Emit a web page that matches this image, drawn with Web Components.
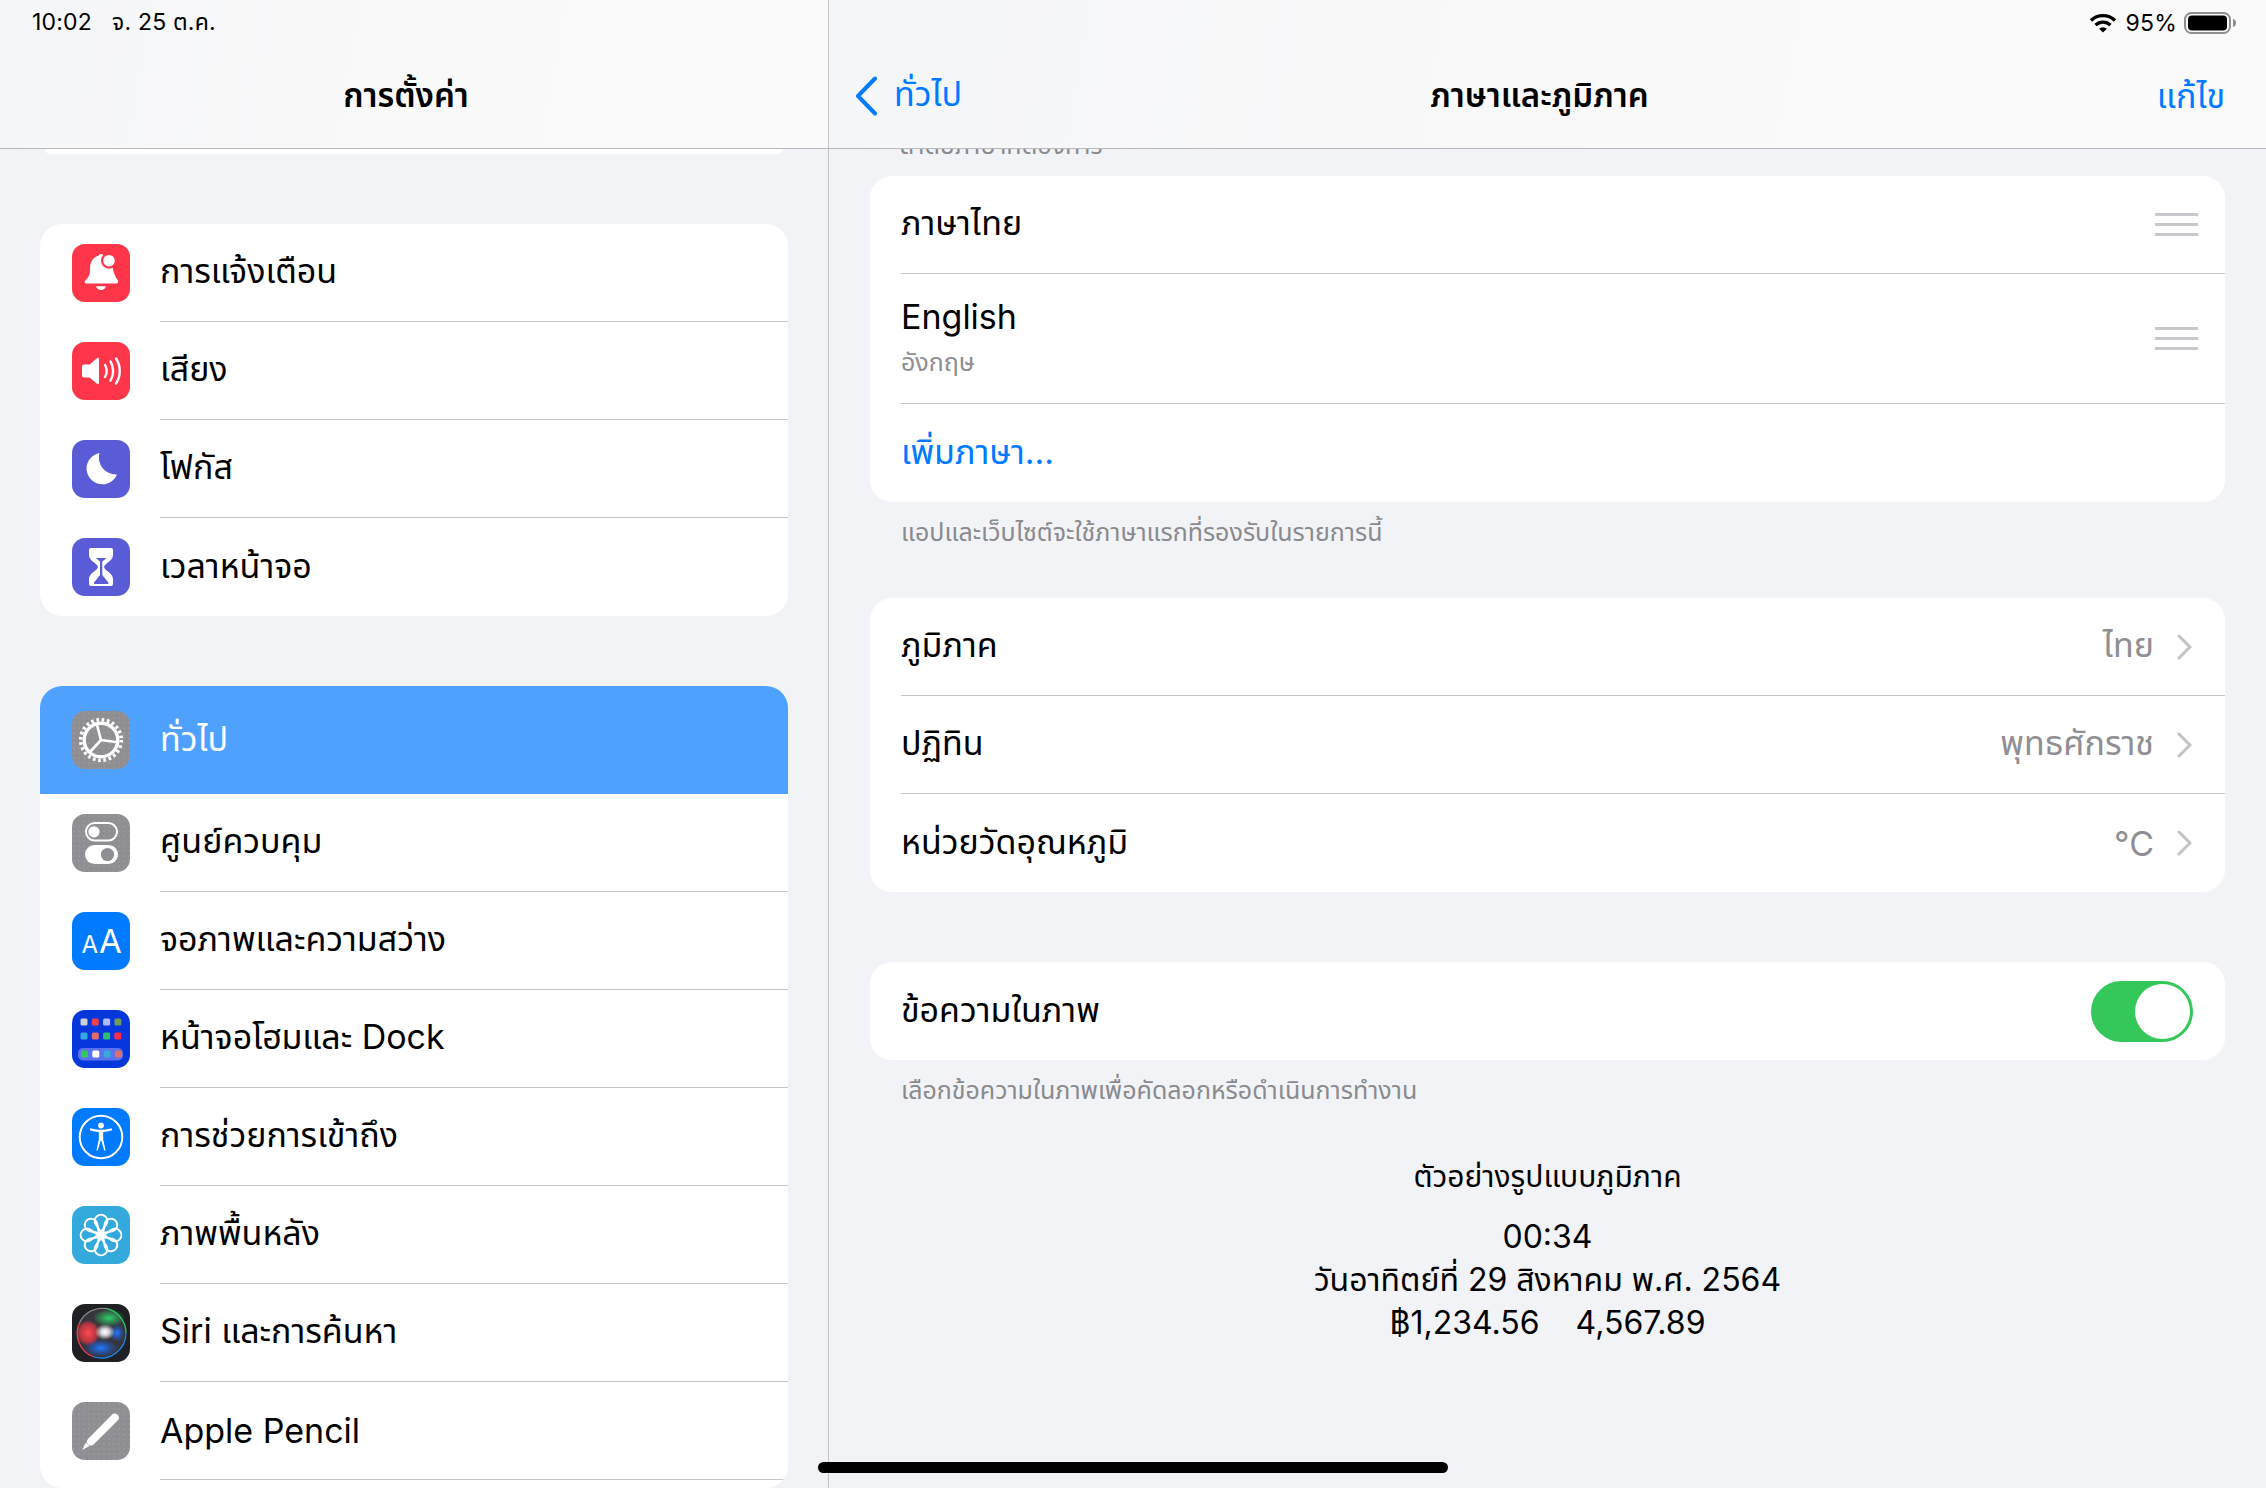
<!DOCTYPE html>
<html lang="th">
<head>
<meta charset="utf-8">
<title>การตั้งค่า</title>
<style>
  html, body { margin: 0; height: 100%; background: #f2f3f7; }
  body { font-family: Inter, "Noto Sans", "Noto Sans Thai", sans-serif; color: #000; overflow: hidden; }
</style>
</head>
<body>

<settings-app>
  <main-pane slot="master">
    <nav-bar slot="bar">
      <span slot="status">10:02&nbsp;&nbsp; จ. 25 ต.ค.</span>
      <span slot="title">การตั้งค่า</span>
    </nav-bar>
    <div class="cut"></div>

    <settings-group style="margin: 0 40px; --gap: 70px">
      <settings-row icon="bell">การแจ้งเตือน</settings-row>
      <settings-row icon="sound">เสียง</settings-row>
      <settings-row icon="moon">โฟกัส</settings-row>
      <settings-row icon="hourglass" last>เวลาหน้าจอ</settings-row>
    </settings-group>

    <settings-group style="margin: 0 40px; --gap: 70px; flex: 1">
      <settings-row icon="gear" selected>ทั่วไป</settings-row>
      <settings-row icon="switches">ศูนย์ควบคุม</settings-row>
      <settings-row icon="text">จอภาพและความสว่าง</settings-row>
      <settings-row icon="home">หน้าจอโฮมและ Dock</settings-row>
      <settings-row icon="access">การช่วยการเข้าถึง</settings-row>
      <settings-row icon="flower">ภาพพื้นหลัง</settings-row>
      <settings-row icon="siri">Siri และการค้นหา</settings-row>
      <settings-row icon="pencil">Apple Pencil</settings-row>
    </settings-group>
  </main-pane>

  <main-pane slot="detail">
    <nav-bar slot="bar">
      <status-icons slot="status"></status-icons>
      <back-link slot="leading">ทั่วไป</back-link>
      <span slot="title">ภาษาและภูมิภาค</span>
      <span slot="trailing">แก้ไข</span>
    </nav-bar>

    <group-note style="margin: -34px 40px 0">ลำดับภาษาที่ต้องการ</group-note>

    <settings-group style="margin: 16px 41px 0 41px">
      <settings-row>ภาษาไทย<drag-handle slot="accessory"></drag-handle></settings-row>
      <settings-row tall>English<span slot="sub">อังกฤษ</span><drag-handle slot="accessory"></drag-handle></settings-row>
      <settings-row last link>เพิ่มภาษา...</settings-row>
    </settings-group>
    <group-note style="margin: 0 41px">แอปและเว็บไซต์จะใช้ภาษาแรกที่รองรับในรายการนี้</group-note>

    <settings-group style="margin: 51px 41px 0">
      <settings-row>ภูมิภาค<span slot="value">ไทย</span><row-chevron slot="accessory"></row-chevron></settings-row>
      <settings-row>ปฏิทิน<span slot="value">พุทธศักราช</span><row-chevron slot="accessory"></row-chevron></settings-row>
      <settings-row last>หน่วยวัดอุณหภูมิ<span slot="value">°C</span><row-chevron slot="accessory"></row-chevron></settings-row>
    </settings-group>

    <settings-group style="margin: 70px 41px 0">
      <settings-row last>ข้อความในภาพ<ios-toggle slot="accessory"></ios-toggle></settings-row>
    </settings-group>
    <group-note style="margin: 0 41px">เลือกข้อความในภาพเพื่อคัดลอกหรือดำเนินการทำงาน</group-note>

    <region-sample>
      <span slot="heading">ตัวอย่างรูปแบบภูมิภาค</span>
      <div>00:34</div>
      <div>วันอาทิตย์ที่ 29 สิงหาคม พ.ศ. 2564</div>
      <div>฿1,234.56&nbsp;&nbsp;&nbsp; 4,567.89</div>
    </region-sample>
  </main-pane>
</settings-app>

<script>
// дробим экран на части: сплит, шапка, группы, строки
const BG_GRAY = '#8e8e93';

function grayBack(id) {
  return `<defs><pattern id="${id}" width="5" height="5" patternUnits="userSpaceOnUse"><circle cx="2" cy="2" r=".5" fill="#b4b4b8"/></pattern></defs>
    <rect width="58" height="58" fill="${BG_GRAY}"/><rect width="58" height="58" fill="url(#${id})"/>`;
}

const ICONS = {
  bell: `<rect width="58" height="58" fill="#ff364a"/>
    <path d="M14.5 39.5c-2 0-2.4-1.8-1.2-3 3-3 4.7-5 4.7-12 0-7.500 4-11.500 8.500-12.700.6-2.400 4.400-2.400 5 0 4 1 7.500 4 8.500 9 1.500 8 3 11.500 5.500 15 1.200 1.500.6 3.700-1 3.700z" fill="#fff"/>
    <path d="M24 42.300h10c-.8 2.500-2.700 3.700-5 3.700s-4.200-1.200-5-3.700z" fill="#fff"/>
    <circle cx="37" cy="16.700" r="8" fill="#ff364a"/><circle cx="37" cy="16.700" r="5.800" fill="#fff"/>`,
  sound: `<rect width="58" height="58" fill="#ff364a"/>
    <path d="M12 22.500h5.500l7.500-6.300c1-.8 2-.3 2 1v23.600c0 1.300-1 1.800-2 1l-7.500-6.300H12c-1.300 0-2-.7-2-2v-9c0-1.300.7-2 2-2z" fill="#fff"/>
    <g fill="none" stroke="#fff" stroke-width="2.400" stroke-linecap="round">
      <path d="M33 23c2 3.500 2 8.500 0 12"/><path d="M38.500 19.500c3.500 5.500 3.500 13.500 0 19"/><path d="M44 16.500c5 7.500 5 17.500 0 25"/>
    </g>`,
  moon: `<rect width="58" height="58" fill="#5a5bd6"/>
    <path d="M27.500 13A15.800 15.800 0 1 0 45 34.500 17 17 0 0 1 27.500 13z" fill="#fff"/>`,
  hourglass: `<rect width="58" height="58" fill="#5a5bd6"/>
    <path d="M19 10h20q2 0 2 2v5c0 6-8 8-9 12 1 4 9 6 9 12v5q0 2-2 2H19q-2 0-2-2v-5c0-6 8-8 9-12-1-4-9-6-9-12v-5q0-2 2-2z" fill="#fff"/>
    <path d="M24 20h10.500l-4.200 3.500V37l6 7.500V46H22v-1.500l6-7.500V23.500z" fill="#5a5bd6"/>`,
  gear: grayBack('dotsA') + `<g fill="none" stroke="#fff">
      <circle cx="29" cy="29" r="20.300" stroke-width="3.600" stroke-dasharray="2.700 2.614"/>
      <circle cx="29" cy="29" r="16.800" stroke-width="3.400"/>
      <path d="M29 29 25 14M29 29 44 31M29 29 18 41" stroke-width="2.600"/>
    </g>`,
  switches: grayBack('dotsB') + `
    <rect x="14" y="9" width="31" height="17.500" rx="8.750" fill="none" stroke="#fff" stroke-width="2"/>
    <circle cx="22" cy="17.800" r="5.600" fill="#fff"/>
    <rect x="13" y="31" width="33" height="19" rx="9.500" fill="#fff"/>
    <circle cx="35.500" cy="40.500" r="6.600" fill="${BG_GRAY}"/>`,
  text: `<rect width="58" height="58" fill="#007aff"/>
    <text x="9.500" y="41" font-family="Inter, sans-serif" font-size="24" fill="#fff">A</text>
    <text x="27" y="41" font-family="Inter, sans-serif" font-size="33" fill="#fff">A</text>`,
  home: `<rect width="58" height="58" fill="#0537dd"/>
    ${['#cfcfd4','#f0404f','#aebcff','#6f9a5e'].map((c, i) => `<rect x="${8.500 + i * 11.300}" y="8.500" width="7" height="7" rx="1.500" fill="${c}"/>`).join('')}
    ${['#34aadc','#e06c6c','#2fbf71','#ff2d46'].map((c, i) => `<rect x="${8.500 + i * 11.300}" y="22.500" width="7" height="7" rx="1.500" fill="${c}"/>`).join('')}
    <rect x="6" y="38" width="45" height="12.500" rx="5" fill="#5a72ee"/>
    ${['#34c759','#ffffff','#34aadc','#e06c6c'].map((c, i) => `<rect x="${9 + i * 11.300}" y="40.500" width="7" height="7" rx="1.500" fill="${c}"/>`).join('')}`,
  access: `<rect width="58" height="58" fill="#007aff"/>
    <circle cx="29" cy="29" r="21.300" fill="none" stroke="#fff" stroke-width="2"/>
    <circle cx="29" cy="17.500" r="2.900" fill="#fff"/>
    <path d="M19 21.500q10 3 20 0" fill="none" stroke="#fff" stroke-width="2.300" stroke-linecap="round"/>
    <path d="M26.800 23.500h4.400v8l2.300 10.300c.2 1-1.200 1.200-1.500.3L29.500 33h-1l-2.500 9.100c-.3.900-1.700.7-1.500-.3l2.300-10.300z" fill="#fff"/>`,
  flower: `<rect width="58" height="58" fill="#34aadc"/>
    <g fill="none" stroke="#fff" stroke-width="2">
      ${[0,45,90,135,180,225,270,315].map(a => `<path transform="rotate(${a} 29 29)" d="M29 26 23.800 18.500A6.300 6.300 0 1 1 34.200 18.500z"/>`).join('')}
    </g>
    <circle cx="29" cy="29" r="3.200" fill="#fff"/>`,
  siri: `<defs>
      <radialGradient id="sR"><stop offset="0" stop-color="#ff4a55"/><stop offset=".7" stop-color="#d8343f" stop-opacity=".8"/><stop offset="1" stop-color="#d8343f" stop-opacity="0"/></radialGradient>
      <radialGradient id="sB"><stop offset="0" stop-color="#1f7cff"/><stop offset="1" stop-color="#1f5cff" stop-opacity="0"/></radialGradient>
      <radialGradient id="sG"><stop offset="0" stop-color="#2fcf6a"/><stop offset="1" stop-color="#2fcf6a" stop-opacity="0"/></radialGradient>
      <radialGradient id="sW"><stop offset="0" stop-color="#fff"/><stop offset=".4" stop-color="#fff" stop-opacity=".8"/><stop offset="1" stop-color="#fff" stop-opacity="0"/></radialGradient>
    </defs>
    <rect width="58" height="58" fill="#1e2023"/>
    <circle cx="29" cy="29" r="25" fill="#34363b"/>
    <ellipse cx="16" cy="29" rx="12" ry="13" fill="url(#sR)"/>
    <ellipse cx="37" cy="14" rx="16" ry="9" fill="url(#sG)"/>
    <ellipse cx="29" cy="44" rx="17" ry="9" fill="url(#sB)"/>
    <ellipse cx="45" cy="29" rx="8" ry="9" fill="url(#sB)"/>
    <ellipse cx="33" cy="28" rx="10" ry="8" fill="url(#sW)"/>
    <path d="M8 18A25 25 0 0 1 35 4.700" fill="none" stroke="#8e8e93" stroke-width="1.200"/>
    <path d="M35 4.700A25 25 0 0 1 54 29" fill="none" stroke="#2fcf6a" stroke-width="1.200"/>
    <path d="M54 29A25 25 0 0 1 22 53" fill="none" stroke="#1f8cff" stroke-width="1.200"/>
    <path d="M22 53A25 25 0 0 1 8 18" fill="none" stroke="#e8404c" stroke-width="1.200"/>`,
  pencil: grayBack('dotsC') + `
    <path d="M19 39.500 42.800 15.700" stroke="#fff" stroke-width="8" stroke-linecap="round"/>
    <path d="M10 48l4-7.500 3.600 3.600z" fill="#fff"/>`
};

function define(name, css, html, extra = class extends HTMLElement {}) {
  const C = class extends extra {
    constructor() {
      super();
      this.attachShadow({ mode: 'open' }).innerHTML = `<style>${css}</style>${html}`;
    }
  };
  customElements.define(name, C);
}

define('settings-app', `
  :host { display: grid; grid-template-columns: 829px 1fr; width: 2266px; height: 1488px; position: relative; overflow: hidden; background: #f2f3f7; }
  .home { position: absolute; left: 818px; top: 1462px; width: 630px; height: 11px; border-radius: 6px; background: #000; }
`, `<slot name="master"></slot><slot name="detail"></slot><div class="home"></div>`);

define('main-pane', `
  :host { display: flex; flex-direction: column; height: 1488px; overflow: hidden; box-sizing: border-box; }
  :host([slot="master"]) { border-right: 1px solid #c4c4c6; }
  ::slotted(.cut) { height: 5px; margin: 0 45px; background: #fff; border-radius: 0 0 14px 14px; flex: none; }
`, `<slot name="bar"></slot><slot></slot>`);

define('nav-bar', `
  :host { display: block; flex: none; position: relative; z-index: 2; box-sizing: border-box; height: 149px; border-bottom: 1px solid #b9b9bc;
    background: linear-gradient(100deg, #f5f6f8, #fafafa 70%); }
  .status { height: 46px; padding: 0 30px 0 32px; display: flex; align-items: center; justify-content: space-between; font-size: 23px; letter-spacing: .2px; }
  .bar { height: 102px; padding: 0 41px 0 25px; display: grid; grid-template-columns: 1fr auto 1fr; align-items: center; font-size: 34px; color: #007aff; }
  .title { color: #000; font-weight: 600; font-size: 33px; }
  .trail { justify-self: end; }
`, `<div class="status"><slot name="status"></slot></div>
  <div class="bar"><div><slot name="leading"></slot></div><div class="title"><slot name="title"></slot></div><div class="trail"><slot name="trailing"></slot></div></div>`);

define('status-icons', `
  :host { display: flex; align-items: center; margin-left: auto; font-size: 23px; }
  svg { display: block; }
  .w { margin-right: 9px; }
  .b { margin-left: 7px; }
`, `<svg class="w" width="28" height="20" viewBox="0 0 28 20"><g fill="none" stroke="#000" stroke-width="3.200"><path d="M2 7.500A17 17 0 0 1 26 7.500"/><path d="M6.500 12A11 11 0 0 1 21.500 12"/></g><path d="M14 19.500 10.200 15.700A5.400 5.400 0 0 1 17.800 15.700z"/></svg>
  <span>95%</span>
  <svg class="b" width="52" height="22" viewBox="0 0 52 22"><rect x="1" y="1" width="45" height="20" rx="6.500" fill="none" stroke="#8e8e93" stroke-width="2"/><rect x="4" y="3.500" width="39" height="15" rx="4" fill="#000"/><path d="M49 7c2 .5 3 2 3 4s-1 3.500-3 4z" fill="#8e8e93"/></svg>`);

define('back-link', `
  :host { display: inline-flex; align-items: center; gap: 16px; color: #007aff; font-size: 34px; }
  svg { display: block; }
`, `<svg width="24" height="40" viewBox="0 0 24 40"><path d="M21 2.500 4 20l17 17.500" fill="none" stroke="#007aff" stroke-width="4" stroke-linecap="round" stroke-linejoin="round"/></svg><slot></slot>`);

define('settings-group', `
  :host { display: block; flex: none; background: #fff; border-radius: 22px; overflow: hidden; margin-top: var(--gap, 0); }
`, `<slot></slot>`, class extends HTMLElement {
  connectedCallback() {
    if (this.style.getPropertyValue('--gap')) this.style.marginTop = this.style.getPropertyValue('--gap');
  }
});

define('settings-row', `
  :host { display: flex; align-items: stretch; color: #000; font-size: 34px; padding-left: 31px; }
  :host([icon]) { padding-left: 32px; }
  .ico { display: none; flex: none; width: 58px; height: 58px; margin: 20px 30px 0 0; border-radius: 13px; overflow: hidden; }
  :host([icon]) .ico { display: block; }
  .ico svg { display: block; }
  .body { flex: 1; min-width: 0; height: 97px; display: flex; align-items: center; justify-content: space-between; gap: 23px; padding-right: 33px; border-bottom: 1px solid #c6c6c8; }
  :host([last]) .body { border-bottom: 0; height: 98px; }
  :host([tall]) .body { height: 129px; }
  :host([link]) { color: #007aff; }
  :host([selected]) { background: #4fa1ff; color: #fff; }
  :host([selected]) .ico { margin-top: 25px; }
  :host([selected]) .body { height: 108px; border-bottom: 0; }
  .text { flex: 1; display: flex; flex-direction: column; }
  .sub { font-size: 25px; color: #8e8e93; margin-top: 7px; }
  .val { color: #8e8e93; }
  slot[name=accessory] { display: block; }
`, `<div class="ico"></div>
  <div class="body">
    <div class="text"><div><slot></slot></div><div class="sub"><slot name="sub"></slot></div></div>
    <span class="val"><slot name="value"></slot></span>
    <slot name="accessory"></slot>
  </div>`, class extends HTMLElement {
  connectedCallback() {
    const name = this.getAttribute('icon');
    if (name) this.shadowRoot.querySelector('.ico').innerHTML = `<svg width="58" height="58" viewBox="0 0 58 58">${ICONS[name]}</svg>`;
    if (!this.querySelector('[slot=sub]')) this.shadowRoot.querySelector('.sub').remove();
  }
});

define('group-note', `
  :host { display: block; padding: 15px 0 0 31px; font-size: 25px; line-height: 30px; color: #8a8a8e; flex: none; }
`, `<slot></slot>`);

define('drag-handle', `
  :host { display: block; width: 43px; height: 23px; margin-right: -6px; box-sizing: border-box; border-top: 3px solid #c7c7cc; border-bottom: 3px solid #c7c7cc; position: relative; }
  i { position: absolute; left: 0; right: 0; top: 7px; height: 3px; background: #c7c7cc; }
`, `<i></i>`);

define('row-chevron', `
  :host { display: block; width: 15px; height: 26px; }
  svg { display: block; }
`, `<svg width="15" height="26" viewBox="0 0 15 26"><path d="M2 2l11 11L2 24" fill="none" stroke="#c4c4c7" stroke-width="3" stroke-linecap="round" stroke-linejoin="round"/></svg>`);

define('ios-toggle', `
  :host { display: block; width: 102px; height: 61px; border-radius: 31px; background: #34c759; position: relative; margin-right: -1px; }
  i { position: absolute; right: 3px; top: 3px; width: 55px; height: 55px; border-radius: 50%; background: #fff; }
`, `<i></i>`);

define('region-sample', `
  :host { display: block; flex: none; text-align: center; font-size: 32px; line-height: 43px; margin-top: 50px; }
  .h { font-size: 30px; margin-bottom: 17px; }
`, `<div class="h"><slot name="heading"></slot></div><slot></slot>`);
</script>
</body>
</html>
